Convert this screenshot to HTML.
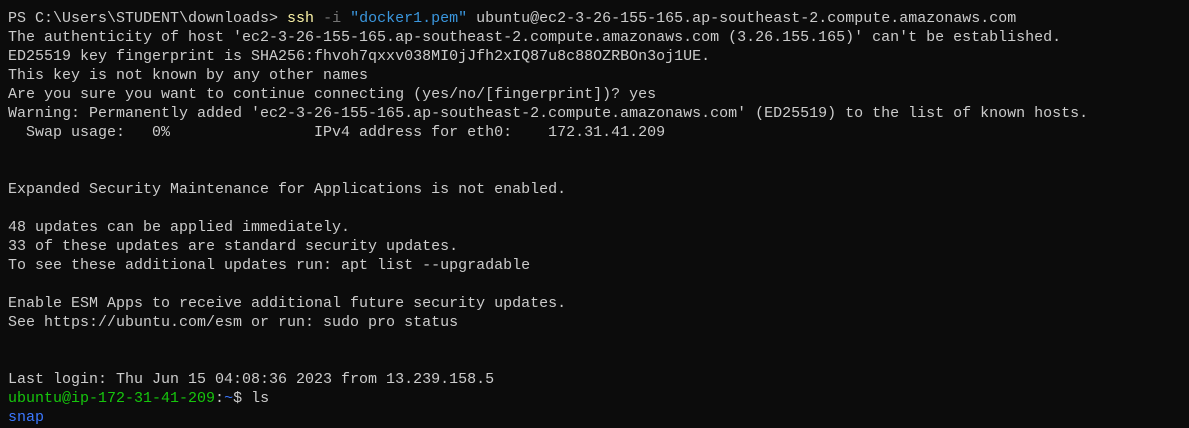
<!DOCTYPE html>
<html><head><style>
html,body{margin:0;padding:0;background:#0c0c0c;width:1189px;height:428px;overflow:hidden}
pre{margin:0;position:absolute;left:8px;top:9px;font-family:"Liberation Mono",monospace;font-size:15px;line-height:19px;color:#cccccc;white-space:pre}
.y{color:#f9f1a5}.g{color:#767676}.s{color:#3a96dd}.gr{color:#16c60c}.b{color:#3b78ff}
</style></head><body>
<pre>PS C:\Users\STUDENT\downloads&gt; <span class="y">ssh</span> <span class="g">-i</span> <span class="s">"docker1.pem"</span> ubuntu@ec2-3-26-155-165.ap-southeast-2.compute.amazonaws.com
The authenticity of host 'ec2-3-26-155-165.ap-southeast-2.compute.amazonaws.com (3.26.155.165)' can't be established.
ED25519 key fingerprint is SHA256:fhvoh7qxxv038MI0jJfh2xIQ87u8c88OZRBOn3oj1UE.
This key is not known by any other names
Are you sure you want to continue connecting (yes/no/[fingerprint])? yes
Warning: Permanently added 'ec2-3-26-155-165.ap-southeast-2.compute.amazonaws.com' (ED25519) to the list of known hosts.
  Swap usage:   0%                IPv4 address for eth0:    172.31.41.209


Expanded Security Maintenance for Applications is not enabled.

48 updates can be applied immediately.
33 of these updates are standard security updates.
To see these additional updates run: apt list --upgradable

Enable ESM Apps to receive additional future security updates.
See https://ubuntu.com/esm or run: sudo pro status


Last login: Thu Jun 15 04:08:36 2023 from 13.239.158.5
<span class="gr">ubuntu@ip-172-31-41-209</span>:<span class="b">~</span>$ ls
<span class="b">snap</span></pre>
</body></html>
